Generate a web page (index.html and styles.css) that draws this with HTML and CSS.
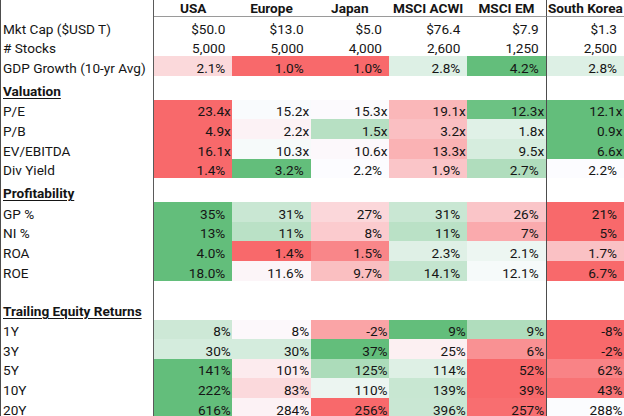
FILE: index.html
```html
<!DOCTYPE html>
<html lang="en">
<head>
<meta charset="utf-8">
<title>Market Comparison</title>
<link rel="stylesheet" href="styles.css">
</head>
<body>
<div class="sheet">
  <div class="row hdr">
    <div class="lab"></div>
    <div class="h">USA</div>
    <div class="h">Europe</div>
    <div class="h">Japan</div>
    <div class="h">MSCI ACWI</div>
    <div class="h">MSCI EM</div>
    <div class="h sk">South Korea</div>
  </div>

  <div class="row">
    <div class="lab">Mkt Cap ($USD T)</div>
    <div class="v">$50.0</div><div class="v">$13.0</div><div class="v">$5.0</div><div class="v">$76.4</div><div class="v">$7.9</div><div class="v sk">$1.3</div>
  </div>
  <div class="row">
    <div class="lab"># Stocks</div>
    <div class="v">5,000</div><div class="v">5,000</div><div class="v">4,000</div><div class="v">2,600</div><div class="v">1,250</div><div class="v sk">2,500</div>
  </div>
  <div class="row">
    <div class="lab">GDP Growth (10-yr Avg)</div>
    <div class="v" style="background:#FBD9DB">2.1%</div><div class="v" style="background:#F8696B">1.0%</div><div class="v" style="background:#F8696B">1.0%</div><div class="v" style="background:#DDF0E5">2.8%</div><div class="v" style="background:#63BE7B">4.2%</div><div class="v sk" style="background:#DDF0E5">2.8%</div>
  </div>

  <div class="row sec">
    <div class="lab"><span class="u">Valuation</span></div>
    <div></div><div></div><div></div><div></div><div></div><div class="sk"></div>
  </div>
  <div class="row">
    <div class="lab">P/E</div>
    <div class="v t" style="background:#F8696B">23.4x</div><div class="v t" style="background:#F9FBFD">15.2x</div><div class="v t" style="background:#FCFAFD">15.3x</div><div class="v t" style="background:#FAB7B9">19.1x</div><div class="v t" style="background:#6CC283">12.3x</div><div class="v t sk" style="background:#63BE7B">12.1x</div>
  </div>
  <div class="row">
    <div class="lab">P/B</div>
    <div class="v t" style="background:#F8696B">4.9x</div><div class="v t" style="background:#FCF2F5">2.2x</div><div class="v t" style="background:#B7E0C3">1.5x</div><div class="v t" style="background:#FABFC2">3.2x</div><div class="v t" style="background:#E0F1E7">1.8x</div><div class="v t sk" style="background:#63BE7B">0.9x</div>
  </div>
  <div class="row">
    <div class="lab">EV/EBITDA</div>
    <div class="v t" style="background:#F8696B">16.1x</div><div class="v t" style="background:#F6FAFA">10.3x</div><div class="v t" style="background:#FCF8FB">10.6x</div><div class="v t" style="background:#FAB2B4">13.3x</div><div class="v t" style="background:#D6EDDE">9.5x</div><div class="v t sk" style="background:#63BE7B">6.6x</div>
  </div>
  <div class="row">
    <div class="lab">Div Yield</div>
    <div class="v" style="background:#F8696B">1.4%</div><div class="v" style="background:#63BE7B">3.2%</div><div class="v" style="background:#FCFCFF">2.2%</div><div class="v" style="background:#FAC5C8">1.9%</div><div class="v" style="background:#B0DDBD">2.7%</div><div class="v sk" style="background:#FCFCFF">2.2%</div>
  </div>

  <div class="row sec">
    <div class="lab"><span class="u">Profitability</span></div>
    <div></div><div></div><div></div><div></div><div></div><div class="sk"></div>
  </div>
  <div class="row">
    <div class="lab">GP %</div>
    <div class="v" style="background:#63BE7B">35%</div><div class="v" style="background:#C9E7D3">31%</div><div class="v" style="background:#FBD7DA">27%</div><div class="v" style="background:#C9E7D3">31%</div><div class="v" style="background:#FAC5C8">26%</div><div class="v sk" style="background:#F8696B">21%</div>
  </div>
  <div class="row">
    <div class="lab">NI %</div>
    <div class="v" style="background:#63BE7B">13%</div><div class="v" style="background:#BAE1C6">11%</div><div class="v" style="background:#FBCBCE">8%</div><div class="v" style="background:#BAE1C6">11%</div><div class="v" style="background:#FAAAAD">7%</div><div class="v sk" style="background:#F8696B">5%</div>
  </div>
  <div class="row">
    <div class="lab">ROA</div>
    <div class="v" style="background:#63BE7B">4.0%</div><div class="v" style="background:#F8696B">1.4%</div><div class="v" style="background:#F98689">1.5%</div><div class="v" style="background:#DFF0E6">2.3%</div><div class="v" style="background:#EDF6F2">2.1%</div><div class="v sk" style="background:#FAC1C4">1.7%</div>
  </div>
  <div class="row">
    <div class="lab">ROE</div>
    <div class="v" style="background:#63BE7B">18.0%</div><div class="v" style="background:#FCF5F8">11.6%</div><div class="v" style="background:#FABFC1">9.7%</div><div class="v" style="background:#C4E5CF">14.1%</div><div class="v" style="background:#F6FAFA">12.1%</div><div class="v sk" style="background:#F8696B">6.7%</div>
  </div>

  <div class="row gap">
    <div class="lab"></div>
    <div></div><div></div><div></div><div></div><div></div><div class="sk"></div>
  </div>
  <div class="row sec">
    <div class="lab"><span class="u">Trailing Equity Returns</span></div>
    <div></div><div></div><div></div><div></div><div></div><div class="sk"></div>
  </div>
  <div class="row">
    <div class="lab">1Y</div>
    <div class="v t" style="background:#CDE8D6">8%</div><div class="v t" style="background:#FCF8FB">8%</div><div class="v t" style="background:#FAA4A6">-2%</div><div class="v t" style="background:#63BE7B">9%</div><div class="v t" style="background:#B0DDBD">9%</div><div class="v t sk" style="background:#F8696B">-8%</div>
  </div>
  <div class="row">
    <div class="lab">3Y</div>
    <div class="v t" style="background:#D4ECDD">30%</div><div class="v t" style="background:#D4ECDD">30%</div><div class="v t" style="background:#63BE7B">37%</div><div class="v t" style="background:#FCF0F2">25%</div><div class="v t" style="background:#F99193">6%</div><div class="v t sk" style="background:#F8696B">-2%</div>
  </div>
  <div class="row">
    <div class="lab">5Y</div>
    <div class="v t" style="background:#63BE7B">141%</div><div class="v t" style="background:#FCEBEE">101%</div><div class="v t" style="background:#ACDCBA">125%</div><div class="v t" style="background:#DEF0E5">114%</div><div class="v t" style="background:#F8696B">52%</div><div class="v t sk" style="background:#F98386">62%</div>
  </div>
  <div class="row">
    <div class="lab">10Y</div>
    <div class="v t" style="background:#63BE7B">222%</div><div class="v t" style="background:#FBD9DC">83%</div><div class="v t" style="background:#ECF5F1">110%</div><div class="v t" style="background:#C8E7D2">139%</div><div class="v t" style="background:#F8696B">39%</div><div class="v t sk" style="background:#F87375">43%</div>
  </div>
  <div class="row">
    <div class="lab">20Y</div>
    <div class="v t" style="background:#63BE7B">616%</div><div class="v t" style="background:#FCF2F5">284%</div><div class="v t" style="background:#F8696B">256%</div><div class="v t" style="background:#C9E7D3">396%</div><div class="v t" style="background:#F86E70">257%</div><div class="v t sk" style="background:#FBFCFE">288%</div>
  </div>
</div>
</body>
</html>
```

FILE: styles.css
```css
html, body {
  margin: 0;
  padding: 0;
  background: #ffffff;
}

body {
  width: 624px;
  height: 416px;
  overflow: hidden;
  font-family: Roboto, "Liberation Sans", sans-serif;
  font-size: 13.6px;
  color: #151515;
}

.sheet {
  display: flex;
  flex-direction: column;
}

.row {
  display: grid;
  grid-template-columns: 154px repeat(6, 1fr);
  height: 19.6px;
}

.row > div {
  box-sizing: border-box;
  display: flex;
  align-items: flex-end;
  line-height: 16px;
  white-space: nowrap;
  min-width: 0;
}

.row .lab {
  border-left: 1px solid #4d4d4d;
  border-right: 1px solid #5a5a5a;
  padding-left: 2px;
}

.row .sk {
  border-left: 1px solid #4d4d4d;
}

.hdr {
  height: 17px;
}

.hdr .h {
  justify-content: center;
  font-weight: 700;
  line-height: 13px;
  padding-bottom: 1px;
  border-bottom: 1px solid #9a9a9a;
}

.sec {
  height: 24px;
}

.sec .lab {
  font-weight: 700;
  padding-bottom: 1px;
}

.u {
  text-decoration: underline;
  text-decoration-thickness: 1px;
  text-underline-offset: 2px;
}

.gap {
  height: 15px;
}

.v {
  justify-content: flex-end;
  padding-right: 7px;
}

.v.t {
  padding-right: 1.5px;
}
```
